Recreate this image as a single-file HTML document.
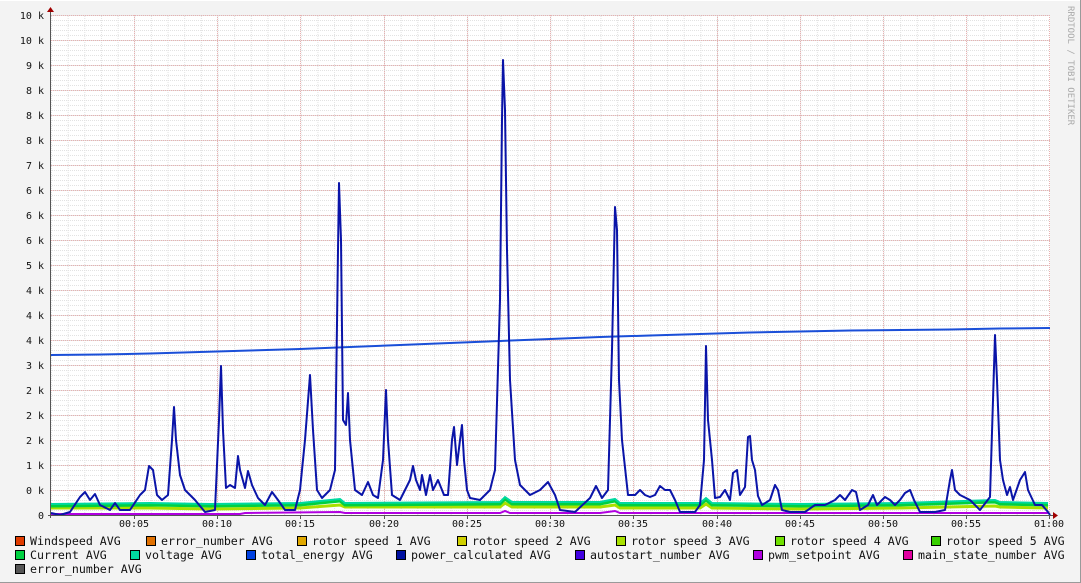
<!DOCTYPE html>
<html><head><meta charset="utf-8"><style>
html,body{margin:0;padding:0;}
body{width:1081px;height:583px;overflow:hidden;background:#f3f3f3;}
svg{display:block;}
text{font-family:"DejaVu Sans Mono","Liberation Mono",monospace;}
</style></head><body>
<svg width="1081" height="583" xmlns="http://www.w3.org/2000/svg">
<defs>
<pattern id="minx" x="51" y="0" width="16.65" height="583" patternUnits="userSpaceOnUse"><line x1="0.5" y1="0" x2="0.5" y2="583" stroke="#e2e2e2" stroke-dasharray="1,1"/></pattern>
<pattern id="miny" x="0" y="15" width="1081" height="5" patternUnits="userSpaceOnUse"><line x1="0" y1="0.5" x2="1081" y2="0.5" stroke="#e2e2e2" stroke-dasharray="1,1"/></pattern>
</defs>
<rect x="0" y="0" width="1081" height="583" fill="#f3f3f3"/>
<line x1="0" y1="0.5" x2="1081" y2="0.5" stroke="#ffffff"/>
<line x1="1080.5" y1="0" x2="1080.5" y2="583" stroke="#9a9a9a"/>
<line x1="0" y1="582.5" x2="1081" y2="582.5" stroke="#9a9a9a"/>
<rect x="51" y="15" width="999" height="500" fill="#ffffff"/>
<rect x="51" y="15" width="999" height="500" fill="url(#minx)"/>
<rect x="51" y="15" width="999" height="500" fill="url(#miny)"/>
<g stroke="#e8b0b0" stroke-dasharray="1,1">
<line x1="51" y1="15.5" x2="1050" y2="15.5"/><line x1="51" y1="40.5" x2="1050" y2="40.5"/><line x1="51" y1="65.5" x2="1050" y2="65.5"/><line x1="51" y1="90.5" x2="1050" y2="90.5"/><line x1="51" y1="115.5" x2="1050" y2="115.5"/><line x1="51" y1="140.5" x2="1050" y2="140.5"/><line x1="51" y1="165.5" x2="1050" y2="165.5"/><line x1="51" y1="190.5" x2="1050" y2="190.5"/><line x1="51" y1="215.5" x2="1050" y2="215.5"/><line x1="51" y1="240.5" x2="1050" y2="240.5"/><line x1="51" y1="265.5" x2="1050" y2="265.5"/><line x1="51" y1="290.5" x2="1050" y2="290.5"/><line x1="51" y1="315.5" x2="1050" y2="315.5"/><line x1="51" y1="340.5" x2="1050" y2="340.5"/><line x1="51" y1="365.5" x2="1050" y2="365.5"/><line x1="51" y1="390.5" x2="1050" y2="390.5"/><line x1="51" y1="415.5" x2="1050" y2="415.5"/><line x1="51" y1="440.5" x2="1050" y2="440.5"/><line x1="51" y1="465.5" x2="1050" y2="465.5"/><line x1="51" y1="490.5" x2="1050" y2="490.5"/>
<line x1="134.5" y1="15" x2="134.5" y2="515"/><line x1="217.5" y1="15" x2="217.5" y2="515"/><line x1="300.5" y1="15" x2="300.5" y2="515"/><line x1="384.5" y1="15" x2="384.5" y2="515"/><line x1="467.5" y1="15" x2="467.5" y2="515"/><line x1="550.5" y1="15" x2="550.5" y2="515"/><line x1="633.5" y1="15" x2="633.5" y2="515"/><line x1="717.5" y1="15" x2="717.5" y2="515"/><line x1="800.5" y1="15" x2="800.5" y2="515"/><line x1="883.5" y1="15" x2="883.5" y2="515"/><line x1="966.5" y1="15" x2="966.5" y2="515"/><line x1="1049.5" y1="15" x2="1049.5" y2="515"/>
</g>
<polyline fill="none" stroke="#b000e0" stroke-width="2" points="51,514 240,514 245,513 340,512 345,513 500,513 505,511 510,513 600,513 615,511 620,513 1048,513"/>
<polyline fill="none" stroke="#a8e000" stroke-width="3" points="51,508 150,508 210,509 300,508 340,505 345,507 500,507 505,503 512,507 600,507 615,505 620,508 700,508 706,504 712,508 800,509 900,508 995,506 1000,507 1048,508"/>
<polyline fill="none" stroke="#00d040" stroke-width="3" points="51,506 150,505 210,506 300,505 340,501 345,505 500,504 505,499 512,504 600,504 615,501 620,505 700,505 706,500 712,505 800,506 900,505 995,502 1000,504 1048,505"/>
<polyline fill="none" stroke="#00d8a0" stroke-width="2" points="51,504 150,503 210,504 300,503 340,499 345,503 500,502 505,497 512,502 600,502 615,499 620,503 700,503 706,498 712,503 800,504 900,503 995,500 1000,502 1048,503"/>
<polyline fill="none" stroke="#1a4fd8" stroke-width="2" points="51,355 100,354.5 150,353.5 200,352 250,350.5 300,349 350,347 400,345 450,343 500,341 550,339 600,337 650,335.5 700,334 750,332.5 800,331.5 850,330.5 900,330 950,329.5 1000,328.5 1050,328"/>
<polyline fill="none" stroke="#0a14a8" stroke-width="2" stroke-linejoin="round" points="51,513 60,515 70,512 80,497 85,492 90,500 95,494 100,505 110,510 115,503 120,510 130,510 140,495 145,490 149,466 153,470 157,495 162,500 168,495 172,440 174,407 176,440 180,475 185,490 195,500 205,512 215,510 219,420 221,366 223,430 226,488 230,485 235,488 238,456 240,470 245,488 248,471 252,485 258,498 265,505 272,492 278,500 285,510 295,510 300,490 305,440 310,375 313,430 317,490 322,498 330,490 335,470 338,250 339,183 341,240 343,420 346,425 348,393 350,440 355,490 362,495 368,482 373,495 378,498 383,460 386,390 388,440 392,495 400,500 410,480 413,466 416,480 420,490 422,475 426,495 430,475 433,490 438,480 444,495 448,495 452,440 454,427 457,465 460,440 462,425 464,460 467,490 470,498 480,500 490,490 495,470 500,300 502,120 503,60 505,110 507,250 510,380 515,460 520,485 530,495 540,490 548,482 555,495 560,510 575,512 590,498 596,486 602,498 608,490 612,350 615,207 617,230 619,380 622,440 628,495 635,495 640,490 645,495 650,497 655,495 660,486 665,490 670,490 675,500 680,512 695,512 700,505 704,460 706,346 708,420 712,460 715,498 720,497 725,490 730,500 733,473 737,470 740,495 745,487 748,437 750,436 752,460 755,470 758,496 762,505 770,500 775,485 778,490 782,510 790,512 805,512 815,505 825,505 835,500 840,495 845,500 852,490 856,492 860,510 868,505 873,495 877,505 885,497 890,500 895,505 900,500 905,493 910,490 914,500 920,512 935,512 945,510 950,480 952,470 955,490 960,495 970,500 980,510 990,497 993,400 995,335 997,380 1000,460 1003,480 1007,495 1010,487 1013,500 1020,480 1025,472 1028,490 1035,505 1042,505 1048,512 1050,515"/>
<line x1="50.5" y1="12" x2="50.5" y2="518" stroke="#555"/>
<line x1="48" y1="515.5" x2="1053" y2="515.5" stroke="#555"/>
<polygon points="47,12 54,12 50.5,7" fill="#a00000"/>
<polygon points="1053,512 1053,519 1058,515.5" fill="#a00000"/>
<g stroke="#555"><line x1="134.5" y1="515" x2="134.5" y2="519"/><line x1="217.5" y1="515" x2="217.5" y2="519"/><line x1="300.5" y1="515" x2="300.5" y2="519"/><line x1="384.5" y1="515" x2="384.5" y2="519"/><line x1="467.5" y1="515" x2="467.5" y2="519"/><line x1="550.5" y1="515" x2="550.5" y2="519"/><line x1="633.5" y1="515" x2="633.5" y2="519"/><line x1="717.5" y1="515" x2="717.5" y2="519"/><line x1="800.5" y1="515" x2="800.5" y2="519"/><line x1="883.5" y1="515" x2="883.5" y2="519"/><line x1="966.5" y1="515" x2="966.5" y2="519"/><line x1="1049.5" y1="515" x2="1049.5" y2="519"/></g>
<g font-size="10" fill="#111" text-anchor="end">
<text x="44" y="19">10 k</text><text x="44" y="44">10 k</text><text x="44" y="69">9 k</text><text x="44" y="94">8 k</text><text x="44" y="119">8 k</text><text x="44" y="144">8 k</text><text x="44" y="169">7 k</text><text x="44" y="194">6 k</text><text x="44" y="219">6 k</text><text x="44" y="244">6 k</text><text x="44" y="269">5 k</text><text x="44" y="294">4 k</text><text x="44" y="319">4 k</text><text x="44" y="344">4 k</text><text x="44" y="369">3 k</text><text x="44" y="394">2 k</text><text x="44" y="419">2 k</text><text x="44" y="444">2 k</text><text x="44" y="469">1 k</text><text x="44" y="494">0 k</text><text x="44" y="519">0</text>
</g>
<g font-size="10" fill="#111" text-anchor="middle">
<text x="134" y="527">00:05</text><text x="217" y="527">00:10</text><text x="300" y="527">00:15</text><text x="384" y="527">00:20</text><text x="467" y="527">00:25</text><text x="550" y="527">00:30</text><text x="633" y="527">00:35</text><text x="717" y="527">00:40</text><text x="800" y="527">00:45</text><text x="883" y="527">00:50</text><text x="966" y="527">00:55</text><text x="1049" y="527">01:00</text>
</g>
<text x="0" y="0" font-size="9" fill="#aaa" transform="translate(1068,6) rotate(90)">RRDTOOL / TOBI OETIKER</text>
<g fill="#111" stroke="#000" stroke-width="1">
<rect x="15.5" y="536.5" width="9" height="9" fill="#e03c00"/>
<rect x="146.5" y="536.5" width="9" height="9" fill="#e07000"/>
<rect x="297.5" y="536.5" width="9" height="9" fill="#e0a800"/>
<rect x="457.5" y="536.5" width="9" height="9" fill="#d0d000"/>
<rect x="616.5" y="536.5" width="9" height="9" fill="#a8e000"/>
<rect x="775.5" y="536.5" width="9" height="9" fill="#70e000"/>
<rect x="931.5" y="536.5" width="9" height="9" fill="#38d000"/>
<rect x="15.5" y="550.5" width="9" height="9" fill="#00d040"/>
<rect x="130.5" y="550.5" width="9" height="9" fill="#00d8a0"/>
<rect x="246.5" y="550.5" width="9" height="9" fill="#0040e0"/>
<rect x="396.5" y="550.5" width="9" height="9" fill="#0010a0"/>
<rect x="575.5" y="550.5" width="9" height="9" fill="#4000e0"/>
<rect x="753.5" y="550.5" width="9" height="9" fill="#b000e0"/>
<rect x="903.5" y="550.5" width="9" height="9" fill="#e000a0"/>
<rect x="15.5" y="564.5" width="9" height="9" fill="#555555"/>
</g>
<g font-size="11.6" fill="#111">
<text x="30" y="545">Windspeed AVG</text>
<text x="161" y="545">error_number AVG</text>
<text x="312" y="545">rotor speed 1 AVG</text>
<text x="472" y="545">rotor speed 2 AVG</text>
<text x="631" y="545">rotor speed 3 AVG</text>
<text x="790" y="545">rotor speed 4 AVG</text>
<text x="946" y="545">rotor speed 5 AVG</text>
<text x="30" y="559">Current AVG</text>
<text x="145" y="559">voltage AVG</text>
<text x="261" y="559">total_energy AVG</text>
<text x="411" y="559">power_calculated AVG</text>
<text x="590" y="559">autostart_number AVG</text>
<text x="768" y="559">pwm_setpoint AVG</text>
<text x="918" y="559">main_state_number AVG</text>
<text x="30" y="573">error_number AVG</text>
</g>
</svg>
</body></html>
